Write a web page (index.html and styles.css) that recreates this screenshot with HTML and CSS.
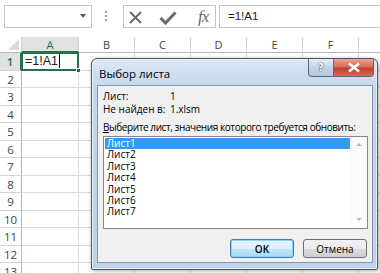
FILE: index.html
```html
<!DOCTYPE html>
<html lang="ru">

<head>
    <meta charset="UTF-8">
    <title>Выбор листа</title>
    <link rel="stylesheet" href="styles.css">
</head>

<body>
    <div class="formula-bar">
        <div class="name-box"><span class="arrow"></span></div>
        <div class="grip"><i></i><i></i><i></i></div>
        <div class="fx-box">
            <svg class="ic-x" width="15" height="13" viewBox="0 0 15 13">
                <path d="M2 1 L13 12 M13 1 L2 12" stroke="#6a6a6a" stroke-width="2" fill="none" />
            </svg>
            <svg class="ic-ok" width="18" height="14" viewBox="0 0 18 14">
                <path d="M1.5 7 L6.5 12 L16.5 1.5" stroke="#6a6a6a" stroke-width="3" fill="none" />
            </svg>
            <span class="fx">fx</span>
        </div>
        <div class="formula-input">=1!A1</div>
    </div>

    <div class="sheet">
        <div class="hd corner"><span class="tri"></span></div>
        <div class="hd col-hd active">A</div>
        <div class="hd col-hd">B</div>
        <div class="hd col-hd">C</div>
        <div class="hd col-hd">D</div>
        <div class="hd col-hd">E</div>
        <div class="hd col-hd">F</div>
        <div class="hd col-hd"></div>

        <div class="rh active">1</div>
        <div class="cell sel">=1!A1<span class="caret"></span><span class="handle"></span></div>
        <div class="cell"></div><div class="cell"></div><div class="cell"></div><div class="cell"></div><div class="cell"></div><div class="cell"></div>

        <div class="rh">2</div><div class="cell"></div><div class="cell"></div><div class="cell"></div><div class="cell"></div><div class="cell"></div><div class="cell"></div><div class="cell"></div>
        <div class="rh">3</div><div class="cell"></div><div class="cell"></div><div class="cell"></div><div class="cell"></div><div class="cell"></div><div class="cell"></div><div class="cell"></div>
        <div class="rh">4</div><div class="cell"></div><div class="cell"></div><div class="cell"></div><div class="cell"></div><div class="cell"></div><div class="cell"></div><div class="cell"></div>
        <div class="rh">5</div><div class="cell"></div><div class="cell"></div><div class="cell"></div><div class="cell"></div><div class="cell"></div><div class="cell"></div><div class="cell"></div>
        <div class="rh">6</div><div class="cell"></div><div class="cell"></div><div class="cell"></div><div class="cell"></div><div class="cell"></div><div class="cell"></div><div class="cell"></div>
        <div class="rh">7</div><div class="cell"></div><div class="cell"></div><div class="cell"></div><div class="cell"></div><div class="cell"></div><div class="cell"></div><div class="cell"></div>
        <div class="rh">8</div><div class="cell"></div><div class="cell"></div><div class="cell"></div><div class="cell"></div><div class="cell"></div><div class="cell"></div><div class="cell"></div>
        <div class="rh">9</div><div class="cell"></div><div class="cell"></div><div class="cell"></div><div class="cell"></div><div class="cell"></div><div class="cell"></div><div class="cell"></div>
        <div class="rh">10</div><div class="cell"></div><div class="cell"></div><div class="cell"></div><div class="cell"></div><div class="cell"></div><div class="cell"></div><div class="cell"></div>
        <div class="rh">11</div><div class="cell"></div><div class="cell"></div><div class="cell"></div><div class="cell"></div><div class="cell"></div><div class="cell"></div><div class="cell"></div>
        <div class="rh">12</div><div class="cell"></div><div class="cell"></div><div class="cell"></div><div class="cell"></div><div class="cell"></div><div class="cell"></div><div class="cell"></div>
        <div class="rh">13</div><div class="cell"></div><div class="cell"></div><div class="cell"></div><div class="cell"></div><div class="cell"></div><div class="cell"></div><div class="cell"></div>
    </div>

    <!-- диалог поверх листа -->
    <div class="dialog">
        <div class="dlg-title">
            <span class="dlg-caption">Выбор листа</span>
            <div class="dlg-buttons">
                <span class="btn-help">?</span>
                <span class="btn-close">
                    <svg width="14" height="11" viewBox="0 0 14 11">
                        <path d="M2 1.5 L12 9.5 M12 1.5 L2 9.5" stroke="#fff" stroke-width="2.6" fill="none" />
                    </svg>
                </span>
            </div>
        </div>
        <div class="dlg-body">
            <div class="info">
                <span>Лист:</span><span>1</span>
                <span>Не найден в:</span><span>1.xlsm</span>
            </div>
            <p class="prompt"><u>В</u>ыберите лист, значения которого требуется обновить:</p>
            <div class="listbox">
                <ul class="items">
                    <li class="selected">Лист1</li>
                    <li>Лист2</li>
                    <li>Лист3</li>
                    <li>Лист4</li>
                    <li>Лист5</li>
                    <li>Лист6</li>
                    <li>Лист7</li>
                </ul>
                <div class="scrollbar">
                    <span class="up"></span>
                    <span class="down"></span>
                </div>
            </div>
            <div class="actions">
                <button class="btn default">OK</button>
                <button class="btn">Отмена</button>
            </div>
        </div>
    </div>
</body>

</html>
```

FILE: styles.css
```css
* {
    margin: 0;
    padding: 0;
    box-sizing: border-box;
    list-style: none;
}

body {
    width: 380px;
    height: 273px;
    overflow: hidden;
    background: #fff;
    position: relative;
    font-family: "Open Sans", "Noto Sans", sans-serif;
}

/* строка формул */
.formula-bar {
    display: flex;
    align-items: flex-start;
    height: 37px;
    padding: 5px 0 0 4px;
}

.name-box {
    width: 88px;
    height: 23px;
    border: 1px solid #c6c6c6;
    display: flex;
    align-items: center;
    justify-content: flex-end;
    padding-right: 5px;
}

.arrow {
    border-left: 3px solid transparent;
    border-right: 3px solid transparent;
    border-top: 4px solid #5a5a5a;
    margin-top: -2px;
}

.grip {
    width: 3px;
    margin: 6px 0 0 13px;
    display: flex;
    flex-direction: column;
    gap: 2px;
}

.grip i {
    width: 2px;
    height: 2px;
    background: #a0a0a0;
}

.fx-box {
    width: 93px;
    height: 23px;
    margin-left: 15px;
    border: 1px solid #c6c6c6;
    display: flex;
    align-items: center;
    padding-left: 4px;
}

.ic-x {
    margin-top: 1px;
}

.ic-ok {
    margin: 2px 0 0 16px;
}

.fx {
    margin-left: 21px;
    font-family: "Liberation Serif", serif;
    font-style: italic;
    font-size: 17px;
    color: #666;
    letter-spacing: -1px;
}

.formula-input {
    flex: 1;
    height: 23px;
    margin-left: 3px;
    border: 1px solid #c6c6c6;
    border-right: none;
    padding-left: 8px;
    font-family: "Liberation Sans", Arial, sans-serif;
    font-size: 11.5px;
    line-height: 21px;
    color: #222;
}

/* сетка листа */
.sheet {
    display: grid;
    grid-template-columns: 22px 57px 56px 56px 56px 56px 56px 56px;
    grid-template-rows: 16px repeat(13, 17.5px);
    font-family: "Open Sans", sans-serif;
    font-size: 11px;
    color: #444;
}

.hd {
    border-right: 1px solid #d4d4d4;
    border-bottom: 1px solid #b8b8b8;
    text-align: center;
    line-height: 15px;
}

.corner {
    position: relative;
}

.tri {
    position: absolute;
    right: 2px;
    bottom: 2px;
    border-left: 11px solid transparent;
    border-bottom: 11px solid #dcdcdc;
}

.col-hd.active {
    background: #e1e1e1;
    color: #217346;
    border-bottom: 2px solid #217346;
}

.rh {
    border-right: 1px solid #b8b8b8;
    border-bottom: 1px solid #d4d4d4;
    text-align: center;
    line-height: 17px;
    font-size: 11.5px;
}

.rh.active {
    background: #e1e1e1;
    color: #217346;
    border-right: 2px solid #217346;
    font-weight: 600;
}

.cell {
    border-right: 1px solid #dadada;
    border-bottom: 1px solid #dadada;
}

.cell.sel {
    position: relative;
    border: 2px solid #217346;
    margin: -1px 0 0 -1px;
    padding-left: 2px;
    font-family: "Liberation Sans", Arial, sans-serif;
    font-size: 12.5px;
    line-height: 15px;
    color: #222;
    display: flex;
    align-items: center;
}

.caret {
    width: 1px;
    height: 14px;
    background: #000;
    margin-left: 1px;
}

.handle {
    position: absolute;
    right: -4px;
    bottom: -4px;
    width: 5px;
    height: 5px;
    background: #217346;
    border: 1px solid #fff;
}

/* окно диалога */
.dialog {
    position: absolute;
    left: 91px;
    top: 58px;
    width: 287px;
    height: 212px;
    border: 1px solid #4d5866;
    border-radius: 6px 6px 2px 2px;
    background: linear-gradient(#dce8f5, #c2d6ec 30px, #bcd2ea);
    box-shadow: 1px 1px 4px rgba(0, 0, 0, 0.35), inset 0 0 0 1px #e9f1fa;
    display: flex;
    flex-direction: column;
    padding: 0 4px 6px 5px;
    font-family: "Open Sans", sans-serif;
    font-size: 10px;
    color: #000;
}

.dlg-title {
    height: 28px;
    display: flex;
    justify-content: space-between;
    align-items: flex-start;
}

.dlg-caption {
    font-size: 11.5px;
    margin: 7px 0 0 2px;
}

.dlg-buttons {
    display: flex;
    margin-right: -1px;
}

.dlg-buttons span {
    height: 18px;
    display: flex;
    align-items: center;
    justify-content: center;
    border: 1px solid #5c6a7c;
    border-top: none;
}

.btn-help {
    width: 25px;
    background: linear-gradient(#e4edf7, #c4d4e6 50%, #b5c8de);
    border-radius: 0 0 0 4px;
    border-right: none !important;
    font-family: "DejaVu Sans", sans-serif;
    font-weight: bold;
    font-size: 11px;
    color: #fff;
    text-shadow: 0 0 1px #334, 0 0 1px #334;
}

.btn-close {
    width: 41px;
    background: linear-gradient(#e8a597, #d46e5c 45%, #c1422f 55%, #cf6b55);
    border-radius: 0 0 4px 0;
}

.dlg-body {
    flex: 1;
    background: #f0f0f0;
    border: 1px solid #8497ad;
    display: flex;
    flex-direction: column;
    padding: 4px 4px 4px 5px;
}

.info {
    display: grid;
    grid-template-columns: 67px 1fr;
    line-height: 13px;
}

.prompt {
    margin-top: 4px;
    line-height: 14px;
    white-space: nowrap;
    letter-spacing: -0.42px;
}

.listbox {
    margin-top: 2px;
    height: 93px;
    background: #fff;
    border: 1px solid #828790;
    display: flex;
}

.items {
    flex: 1;
    padding: 1px 0 0 1px;
}

.items li {
    height: 11.4px;
    line-height: 11.4px;
    padding-left: 2px;
}

.items li.selected {
    background: #3399ff;
    color: #fff;
}

.scrollbar {
    width: 17px;
    background: #fbfbfb;
    display: flex;
    flex-direction: column;
    justify-content: space-between;
    align-items: center;
    padding: 6px 0 7px;
}

.scrollbar span {
    border-left: 3px solid transparent;
    border-right: 3px solid transparent;
}

.scrollbar .up {
    border-bottom: 3px solid #b8b8b8;
}

.scrollbar .down {
    border-top: 3px solid #b8b8b8;
}

.actions {
    display: flex;
    justify-content: flex-end;
    gap: 9px;
    margin-top: 10px;
    padding-right: 1px;
}

.btn {
    width: 64px;
    height: 19px;
    border: 1px solid #707070;
    border-radius: 3px;
    background: linear-gradient(#f2f2f2, #ebebeb 50%, #dddddd 51%, #cfcfcf);
    font-family: "Open Sans", sans-serif;
    font-size: 10px;
    color: #000;
}

.btn.default {
    border-color: #3c7fb1;
    box-shadow: inset 0 0 0 1px #8fd0f5;
    background: linear-gradient(#eaf6fd, #d9f0fc 50%, #bee6fd 51%, #a7d9f5);
    font-weight: 600;
}
```
